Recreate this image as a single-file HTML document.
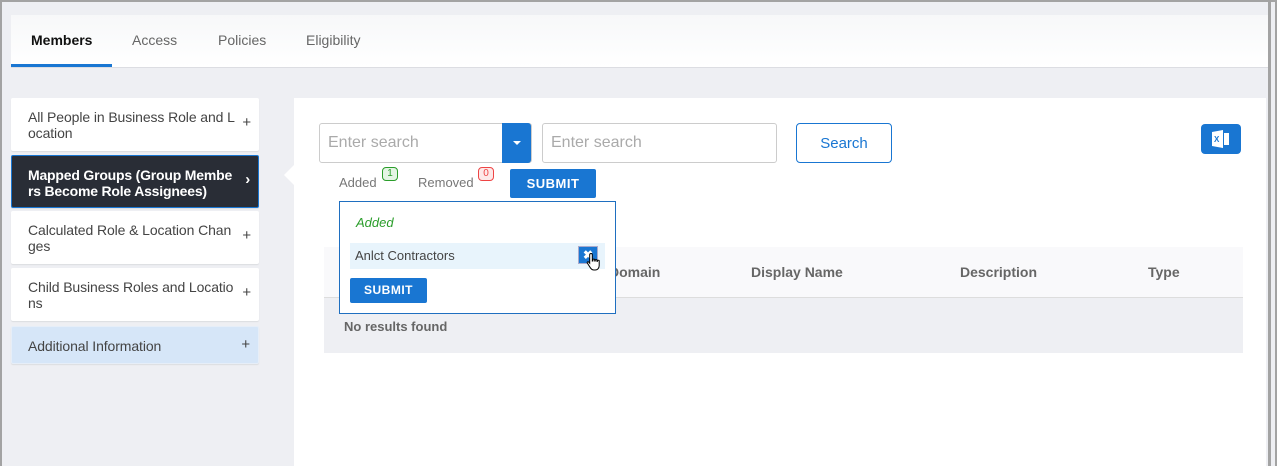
<!DOCTYPE html>
<html><head><style>
*{box-sizing:border-box;margin:0;padding:0}
body{width:1277px;height:466px;overflow:hidden;background:#eeeff3;font-family:"Liberation Sans",Arial,sans-serif;position:relative}
.frame{position:absolute;left:0;top:0;width:1277px;height:466px;border:2px solid #a3a3a3;border-bottom:none}
.abs{position:absolute}
.tabs{left:11px;top:15px;width:1257px;height:53px;background:linear-gradient(#f7f8f9,#fff);border-bottom:1px solid #dcdde2}
.tab{position:absolute;top:17px;font-size:14px;color:#666}
.side{left:11px;width:248px;background:#fff;border-radius:2px;font-size:14px;color:#444;line-height:16px;padding:0 0 0 17px;box-shadow:0 1px 1px rgba(0,0,0,.08);letter-spacing:-.1px}
.side .p{position:absolute;right:8px;font-size:15px;color:#444}
.main{left:294px;top:98px;width:972px;height:368px;background:#fff}
.inp{height:40px;border:1px solid #ccc;border-radius:3px;font-size:16px;color:#aaa;padding:10px 8px;background:#fff}
.btn{background:#1976d2;color:#fff;font-weight:bold;font-size:12px;letter-spacing:.5px;text-align:center;border-radius:2px}
</style></head><body>
<div class="abs tabs">
 <div class="tab" style="left:20px;color:#111;font-weight:bold">Members</div>
 <div class="tab" style="left:121px">Access</div>
 <div class="tab" style="left:207px">Policies</div>
 <div class="tab" style="left:295px">Eligibility</div>
 <div class="abs" style="left:0;top:49px;width:101px;height:3px;background:#1976d2"></div>
</div>
<div class="abs side" style="top:98px;height:53px;padding-top:11px">All People in Business Role and L<br>ocation<span class="p" style="top:17px">+</span></div>
<div class="abs side" style="top:155px;height:53px;padding-top:11px;background:#292d36;color:#fff;font-weight:bold;border:1px solid #1976d2;padding-left:16px;letter-spacing:-.2px">Mapped Groups (Group Membe<br>rs Become Role Assignees)<span class="p" style="top:16px;color:#fff">›</span></div>
<div class="abs side" style="top:211px;height:53px;padding-top:11px">Calculated Role &amp; Location Chan<br>ges<span class="p" style="top:17px">+</span></div>
<div class="abs side" style="top:268px;height:53px;padding-top:11px">Child Business Roles and Locatio<br>ns<span class="p" style="top:17px">+</span></div>
<div class="abs side" style="top:326px;height:38px;padding-top:11px;padding-left:16px;background:#d6e6f8;border:1px solid #e6eef8">Additional Information<span class="p" style="top:10px">+</span></div>
<div class="abs main"></div>
<div class="abs" style="left:284px;top:165px;width:0;height:0;border-top:10px solid transparent;border-bottom:10px solid transparent;border-right:10px solid #fff"></div>
<div class="abs inp" style="left:319px;top:123px;width:213px">Enter search</div>
<div class="abs" style="left:502px;top:123px;width:29px;height:40px;background:#1976d2;border-radius:0 3px 3px 0"><div class="abs" style="left:11px;top:18px;border-left:4px solid transparent;border-right:4px solid transparent;border-top:4px solid #fff"></div></div>
<div class="abs inp" style="left:542px;top:123px;width:235px">Enter search</div>
<div class="abs" style="left:796px;top:123px;width:96px;height:40px;border:1px solid #1976d2;border-radius:4px;color:#1976d2;font-size:15px;text-align:center;line-height:40px">Search</div>
<div class="abs" style="left:1201px;top:124px;width:40px;height:30px;background:#1976d2;border-radius:4px">
 <svg class="abs" style="left:11px;top:6px" width="18" height="18" viewBox="0 0 18 18"><polygon points="0,2 11,0 11,18 0,16" fill="#fff"/><rect x="12" y="3" width="5" height="12" fill="#fff"/><text x="2" y="12" font-size="8" font-weight="bold" fill="#1976d2" font-family="Liberation Sans">X</text></svg>
</div>
<div class="abs" style="left:339px;top:175px;font-size:13px;color:#777">Added</div>
<div class="abs" style="left:382px;top:167px;width:16px;height:14px;border:1px solid #2a9d2a;background:#e4f5e4;border-radius:4px;font-size:10px;color:#2a9d2a;text-align:center;line-height:12px">1</div>
<div class="abs" style="left:418px;top:175px;font-size:13px;color:#777">Removed</div>
<div class="abs" style="left:478px;top:167px;width:16px;height:14px;border:1px solid #e44;background:#fde8e8;border-radius:4px;font-size:10px;color:#e44;text-align:center;line-height:12px">0</div>
<div class="abs btn" style="left:510px;top:169px;width:86px;height:29px;line-height:29px;font-size:13px">SUBMIT</div>
<div class="abs" style="left:324px;top:247px;width:919px;height:51px;background:#f9f9fb;border-bottom:1px solid #ddd;font-size:14px;font-weight:bold;color:#666">
 <span class="abs" style="left:285px;top:17px">Domain</span>
 <span class="abs" style="left:427px;top:17px">Display Name</span>
 <span class="abs" style="left:636px;top:17px">Description</span>
 <span class="abs" style="left:824px;top:17px">Type</span>
</div>
<div class="abs" style="left:324px;top:298px;width:919px;height:55px;background:#eeeff3"><span class="abs" style="left:20px;top:21px;font-size:13px;font-weight:bold;color:#666">No results found</span></div>
<div class="abs" style="left:339px;top:201px;width:277px;height:113px;background:#fff;border:1px solid #1f6fc0">
 <div class="abs" style="left:16px;top:13px;font-size:13px;font-style:italic;color:#2a9d2a">Added</div>
 <div class="abs" style="left:10px;top:41px;width:255px;height:26px;background:#e8f4fc;font-size:13px;color:#444;padding:5px 5px">Anlct Contractors</div>
 <div class="abs" style="left:238px;top:44px;width:20px;height:18px;background:#1976d2;border:1px solid #aac;color:#fff;font-size:12px;font-weight:bold;text-align:center;line-height:16px">✖</div>
 <svg class="abs" style="left:246px;top:50px" width="16" height="20" viewBox="0 0 16 20"><path d="M5 1.5c.8 0 1.3.6 1.3 1.3V9l.6-.1V7.6c0-.7 1.8-.7 1.8 0V9h.5V8.2c0-.7 1.8-.7 1.8 0v1.2h.4v-.6c0-.7 1.8-.7 1.8 0v4.7c0 2.5-1.5 4.5-4 4.5H8c-1.8 0-2.8-1-3.6-2.2L1.3 11c-.5-.8.6-1.7 1.3-1l1.1 1.2V2.8c0-.7.5-1.3 1.3-1.3z" fill="#fff" stroke="#000" stroke-width="1"/></svg>
 <div class="abs btn" style="left:10px;top:76px;width:77px;height:25px;line-height:25px">SUBMIT</div>
</div>
<div class="abs" style="left:1268px;top:0;width:3px;height:466px;background:#a3a3a3"></div>
<div class="frame"></div>
</body></html>
